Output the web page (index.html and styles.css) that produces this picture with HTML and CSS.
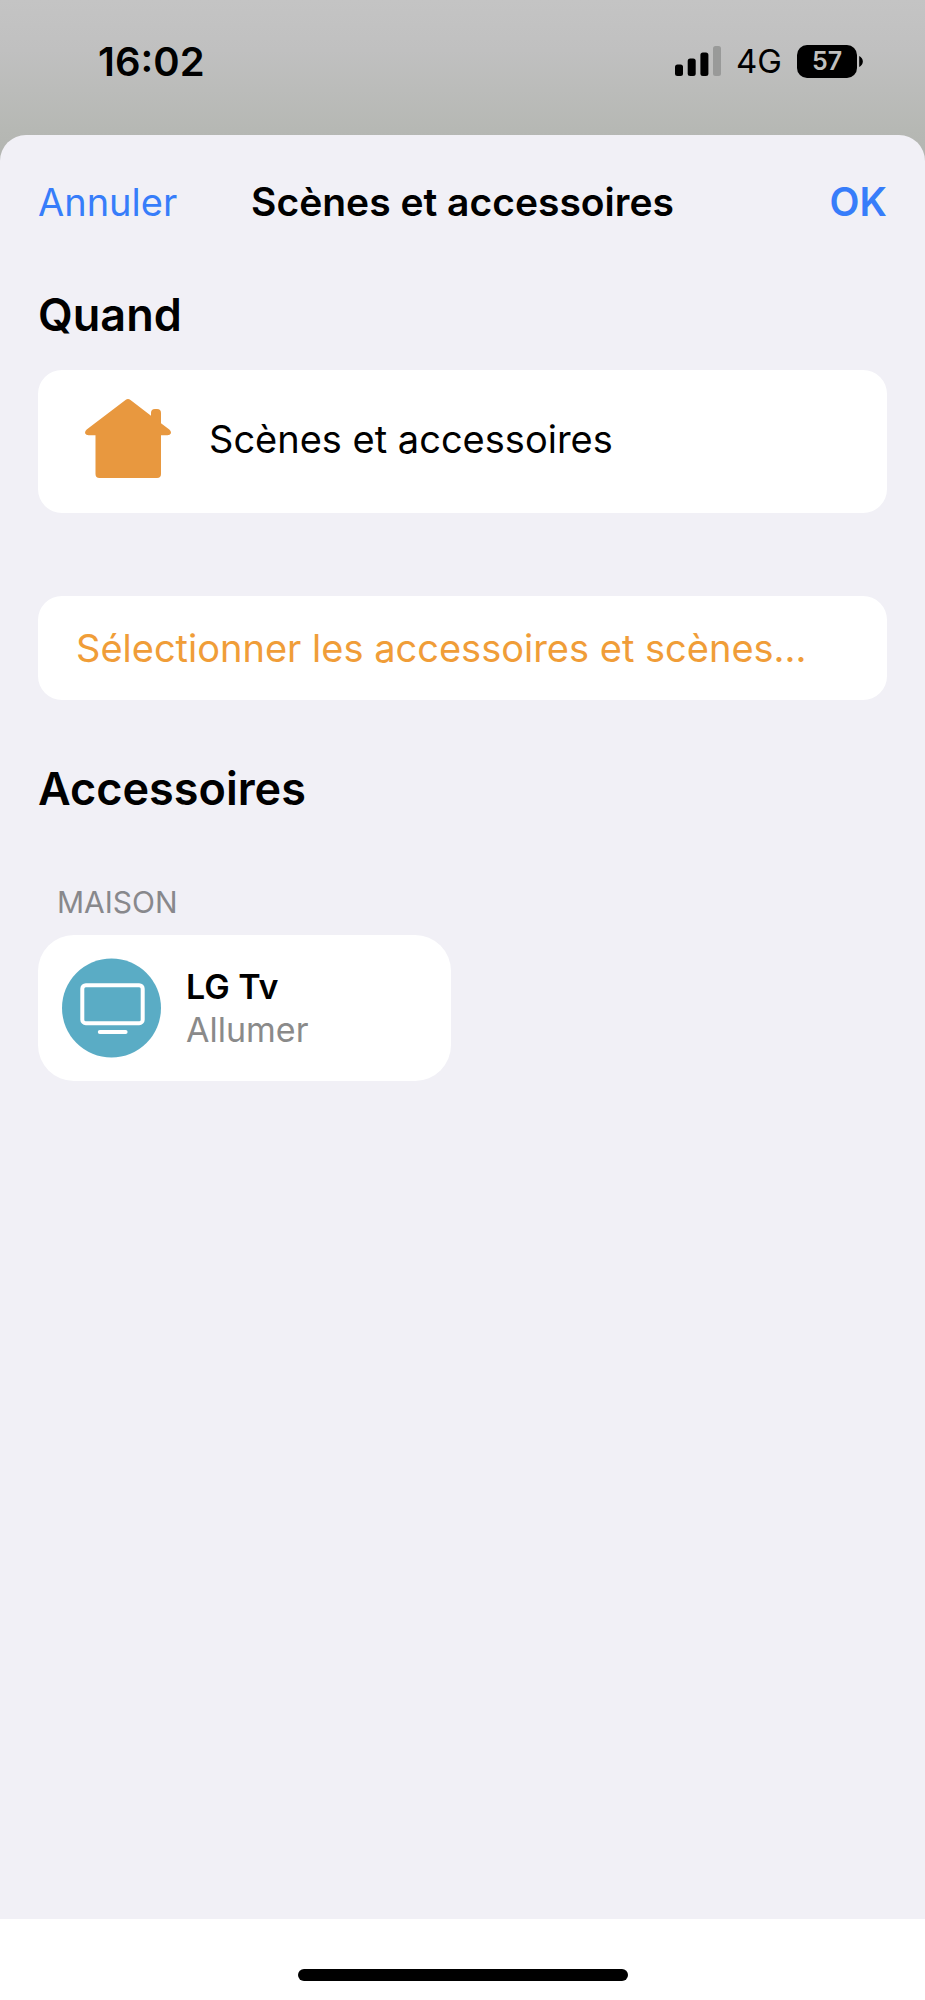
FILE: index.html
```html
<!DOCTYPE html>
<html lang="fr">
<head>
<meta charset="utf-8">
<meta name="viewport" content="width=device-width, initial-scale=1">
<title>Scènes et accessoires</title>
<link rel="stylesheet" href="styles.css">
</head>
<body>
<div class="screen">
  <header class="status">
    <time class="status-time">16:02</time>
    <div class="status-icons">
      <svg class="signal" viewBox="0 0 46 30" role="img" aria-label="Réseau">
        <rect x="0" y="18.500" width="8" height="11.500" rx="2.500"/>
        <rect x="12.700" y="12.500" width="8" height="17.500" rx="2.500"/>
        <rect x="25.400" y="6.500" width="8" height="23.500" rx="2.500"/>
        <rect x="38" y="0" width="8" height="30" rx="2.500" class="signal-off"/>
      </svg>
      <span class="network">4G</span>
      <div class="battery">
        <span class="battery-level">57</span>
        <svg class="battery-cap" viewBox="0 0 4 12" aria-hidden="true"><path d="M0 0C2.400 1 4 3.300 4 6S2.400 11 0 12Z"/></svg>
      </div>
    </div>
  </header>

  <main class="sheet">
    <nav class="navbar">
      <button class="nav-button" type="button">Annuler</button>
      <h1 class="nav-title">Scènes et accessoires</h1>
      <button class="nav-button nav-confirm" type="button">OK</button>
    </nav>

    <section class="section">
      <h2 class="heading">Quand</h2>
      <div class="card trigger">
        <svg class="house" viewBox="0 0 86 80" aria-hidden="true">
          <path d="M40.500 1Q43 -0.800 45.500 1L66 16.800V14Q66 10 70 10H72Q76 10 76 14V24.300L84.300 30.500Q86.500 32.500 85.800 34.500Q85 36.300 82.500 36.300H76V75Q76 79 72 79H14.500Q10.500 79 10.500 75V36.300H3.500Q1 36.300 0.200 34.500Q-0.400 32.500 1.700 30.500Z"/>
        </svg>
        <span>Scènes et accessoires</span>
      </div>
      <button class="card select" type="button">Sélectionner les accessoires et scènes...</button>
    </section>

    <section class="section accessories">
      <h2 class="heading">Accessoires</h2>
      <h3 class="room">MAISON</h3>
      <div class="tiles">
        <button class="tile" type="button">
          <svg class="tv" viewBox="0 0 100 100" aria-hidden="true">
            <circle cx="49.500" cy="50" r="49.500" class="tv-disc"/>
            <rect x="20.300" y="27.200" width="60.400" height="38" rx="3.500" class="tv-frame"/>
            <path d="M37.800 74H63.600" class="tv-frame"/>
          </svg>
          <span class="tile-text">
            <span class="tile-name">LG Tv</span>
            <span class="tile-state">Allumer</span>
          </span>
        </button>
      </div>
    </section>
  </main>

  <footer class="home-area"><div class="home-indicator"></div></footer>
</div>
</body>
</html>
```

FILE: styles.css
```css
* {
  box-sizing: border-box;
}

body {
  margin: 0;
  font-family: Inter, "Liberation Sans", sans-serif;
  font-size: 38px;
  line-height: 48px;
  color: #000;
  background: #fff;
}

button {
  margin: 0;
  padding: 0;
  border: 0;
  background: none;
  font: inherit;
  text-align: left;
  cursor: pointer;
}

h1,
h2,
h3 {
  margin: 0;
}

.screen {
  display: flex;
  flex-direction: column;
  min-height: 100vh;
  background: linear-gradient(#c4c4c4, #c0c0c0 50px, #b6b8b4 130px, #b2b4b0 170px, #fff 170px);
}

.status {
  display: flex;
  justify-content: space-between;
  align-items: flex-start;
  height: 135px;
  padding: 38px 62px 0 98px;
}

.status-time {
  font-size: 40px;
  font-weight: 600;
}

.status-icons {
  display: flex;
  align-items: center;
  height: 46px;
}

.signal {
  width: 46px;
  height: 30px;
}

.signal-off {
  fill: #999a99;
}

.network {
  margin: 0 15px;
  font-size: 33px;
}

.battery {
  display: flex;
  align-items: center;
  gap: 2px;
}

.battery-level {
  width: 60px;
  border-radius: 10px;
  background: #000;
  color: #c0c0bf;
  font-size: 25px;
  font-weight: 600;
  line-height: 33px;
  text-align: center;
}

.battery-cap {
  width: 4px;
  height: 11px;
}

.sheet {
  flex: 1;
  padding: 0 38px;
  border-radius: 26px 26px 0 0;
  background: #f1f0f6;
}

.navbar {
  display: grid;
  grid-template-columns: 1fr auto 1fr;
  align-items: center;
  height: 133px;
}

.nav-button {
  justify-self: start;
  color: #377dfa;
}

.nav-title,
.nav-confirm {
  font-size: 39px;
  font-weight: 600;
}

.nav-confirm {
  justify-self: end;
}

.section {
  display: flex;
  flex-direction: column;
}

.heading {
  margin-top: 19px;
  font-size: 45px;
  font-weight: 600;
  line-height: 56px;
}

.card {
  display: flex;
  align-items: center;
  border-radius: 24px;
  background: #fff;
}

.trigger {
  gap: 38px;
  height: 143px;
  margin-top: 27px;
  padding: 0 47px 6px;
}

.house {
  width: 86px;
  height: 80px;
  fill: #e8983f;
}

.select {
  height: 104px;
  margin-top: 83px;
  padding: 0 38px;
  color: #f09d38;
}

.accessories {
  margin-top: 42px;
}

.room {
  margin: 66px 0 0 19px;
  color: #88888c;
  font-size: 30px;
  font-weight: 400;
  line-height: 38px;
}

.tiles {
  display: grid;
  grid-template-columns: 1fr 1fr;
  gap: 24px;
  margin-top: 14px;
}

.tile {
  display: flex;
  align-items: center;
  gap: 24px;
  height: 146px;
  padding: 0 24px;
  border-radius: 36px;
  background: #fff;
}

.tv {
  width: 100px;
  height: 100px;
}

.tv-disc {
  fill: #5aacc5;
}

.tv-frame {
  fill: none;
  stroke: #fff;
  stroke-width: 4;
  stroke-linecap: round;
}

.tile-text {
  display: flex;
  flex-direction: column;
  font-size: 34px;
  line-height: 43px;
}

.tile-name {
  font-weight: 600;
}

.tile-state {
  color: #8a8a8a;
}

.home-area {
  display: flex;
  justify-content: center;
  align-items: flex-end;
  height: 81px;
  padding-bottom: 19px;
  background: #fff;
}

.home-indicator {
  width: 330px;
  height: 12px;
  border-radius: 6px;
  background: #000;
}
```
